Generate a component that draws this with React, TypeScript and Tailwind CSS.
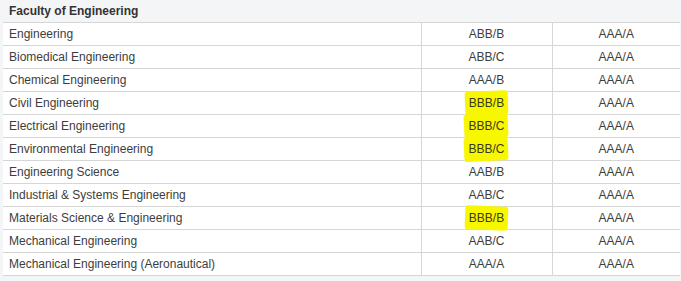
import React from "react";

type Row = {
  name: string;
  a: string;
  b: string;
  mark?: string;
};

const rows: Row[] = [
  { name: "Engineering", a: "ABB/B", b: "AAA/A" },
  { name: "Biomedical Engineering", a: "ABB/C", b: "AAA/A" },
  { name: "Chemical Engineering", a: "AAA/B", b: "AAA/A" },
  { name: "Civil Engineering", a: "BBB/B", b: "AAA/A", mark: "-rotate-2" },
  { name: "Electrical Engineering", a: "BBB/C", b: "AAA/A", mark: "-rotate-3" },
  { name: "Environmental Engineering", a: "BBB/C", b: "AAA/A", mark: "-rotate-3" },
  { name: "Engineering Science", a: "AAB/B", b: "AAA/A" },
  { name: "Industrial & Systems Engineering", a: "AAB/C", b: "AAA/A" },
  { name: "Materials Science & Engineering", a: "BBB/B", b: "AAA/A", mark: "rotate-2" },
  { name: "Mechanical Engineering", a: "AAB/C", b: "AAA/A" },
  { name: "Mechanical Engineering (Aeronautical)", a: "AAA/A", b: "AAA/A" },
];

// yellow marker stroke behind the grade
function Marked({ label, tilt }: { label: string; tilt: string }) {
  return (
    <span className="relative inline-block">
      <span
        className={`absolute -left-[4px] -right-[4px] -top-[3px] -bottom-[3px] bg-[#f7f700] rounded-[3px] ${tilt}`}
      />
      <span className="relative text-[#3a3a22]">{label}</span>
    </span>
  );
}

function App() {
  return (
    <div
      className="w-[681px] h-[281px] bg-[#f3f5f6] pl-[3px] pr-[1px] text-[12px] text-[#3d3d3d]"
      style={{ fontFamily: '"Liberation Sans", Arial, sans-serif' }}
    >
      <table className="w-full border-collapse table-fixed">
        <colgroup>
          <col className="w-[418px]" />
          <col className="w-[131px]" />
          <col />
        </colgroup>
        <thead>
          <tr className="h-[22px] border-b border-[#d6d6d6]">
            <th
              colSpan={3}
              className="text-left font-bold text-[#333] px-[6px] py-0 align-middle"
            >
              Faculty of Engineering
            </th>
          </tr>
        </thead>
        <tbody className="bg-white">
          {rows.map((row, index) => (
            <tr key={index} className="h-[23px] border-b border-[#d6d6d6]">
              <td className="px-[6px] py-0 align-middle">{row.name}</td>
              <td className="border-l border-[#d6d6d6] text-center py-0 align-middle">
                {row.mark ? <Marked label={row.a} tilt={row.mark} /> : row.a}
              </td>
              <td className="border-l border-[#d6d6d6] text-center py-0 align-middle">
                {row.b}
              </td>
            </tr>
          ))}
        </tbody>
      </table>
    </div>
  );
}

export default App;
